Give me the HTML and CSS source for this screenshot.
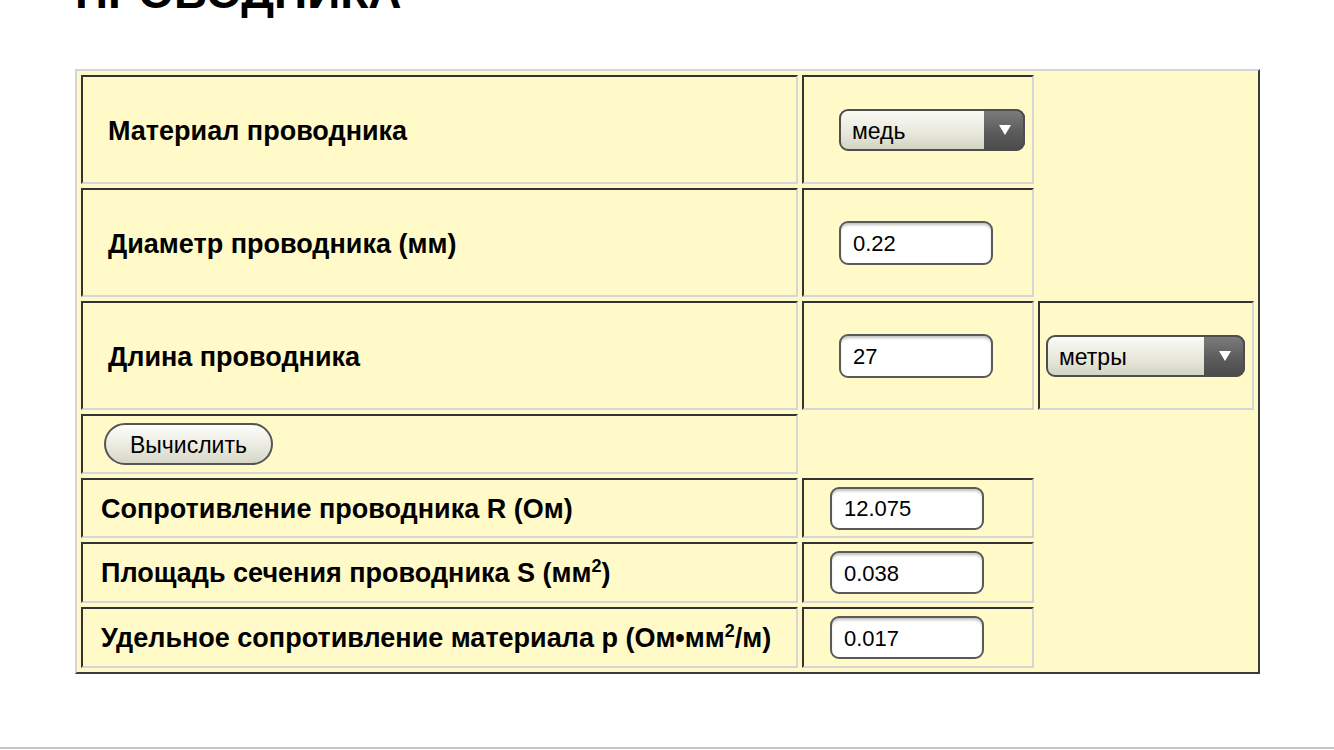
FILE: index.html
```html
<!DOCTYPE html>
<html lang="ru">
<head>
  <meta charset="UTF-8" />
  <title>Сопротивление проводника</title>
  <link rel="stylesheet" href="styles.css">
</head>
<body>
  <div class="page">
    <h1 class="title">ПРОВОДНИКА</h1>

    <table class="calc">
      <colgroup>
        <col class="col-label">
        <col class="col-field">
        <col class="col-unit">
      </colgroup>
      <tr class="row-in">
        <td class="label">Материал проводника</td>
        <td class="field">
          <span class="pick pick-mat">
            <select>
              <option selected>медь</option>
              <option>алюминий</option>
              <option>серебро</option>
            </select>
          </span>
        </td>
      </tr>
      <tr class="row-in">
        <td class="label">Диаметр проводника (мм)</td>
        <td class="field"><input type="text" class="box" value="0.22"></td>
      </tr>
      <tr class="row-in">
        <td class="label">Длина проводника</td>
        <td class="field"><input type="text" class="box" value="27"></td>
        <td class="unit">
          <span class="pick pick-unit">
            <select>
              <option selected>метры</option>
              <option>сантиметры</option>
            </select>
          </span>
        </td>
      </tr>
      <tr class="row-btn">
        <td class="action"><button class="calc-btn">Вычислить</button></td>
      </tr>
      <tr class="row-out">
        <td class="label">Сопротивление проводника R (Ом)</td>
        <td class="field"><input type="text" class="box" value="12.075"></td>
      </tr>
      <tr class="row-out tall">
        <td class="label">Площадь сечения проводника S (мм<sup>2</sup>)</td>
        <td class="field"><input type="text" class="box" value="0.038"></td>
      </tr>
      <tr class="row-out tall">
        <td class="label">Удельное сопротивление материала p (Ом•мм<sup>2</sup>/м)</td>
        <td class="field"><input type="text" class="box" value="0.017"></td>
      </tr>
    </table>
  </div>

  <div class="rule"></div>
</body>
</html>
```

FILE: styles.css
```css
body {
  margin: 0;
  padding: 0;
  font-family: "Liberation Sans", Arial, sans-serif;
  color: #000;
  background: #fff;
  overflow: hidden;
}

.page {
  padding: 0 74px 0 75px;
}

.title {
  margin: -34px 0 51px;
  font-size: 46px;
  line-height: 52px;
  font-weight: bold;
}

.calc {
  width: 1185px;
  table-layout: fixed;
  border-collapse: separate;
  border-spacing: 4px;
  background: #fffac8;
  border: 2px solid;
  border-color: #d4d4d4 #3a3a3a #3a3a3a #d4d4d4;
}

.col-label { width: 717px; }
.col-field { width: 232px; }
.col-unit { width: 216px; }

.calc td {
  box-sizing: border-box;
  border: 2px solid;
  border-color: #333 #d6d6d6 #d6d6d6 #333;
  padding: 0;
  vertical-align: middle;
}

.row-in td { height: 109px; }
.row-btn td { height: 60px; }
.row-out td { height: 60px; }
.row-out.tall td { height: 61px; }

.label {
  font-size: 27px;
  font-weight: bold;
  white-space: nowrap;
}

.calc .row-in .label { padding: 3px 0 0 25px; }
.calc .row-in .field { padding-left: 35px; }
.calc .row-out .label { padding: 2px 0 0 18px; }
.calc .row-out .field { padding-left: 26px; }
.calc .unit { padding-left: 6px; }
.calc .action { padding-left: 21px; }

.label sup {
  font-size: 18px;
  line-height: 0;
}

.box {
  box-sizing: border-box;
  width: 154px;
  height: 44px;
  padding: 2px 12px 0;
  font: 22px "Liberation Sans", Arial, sans-serif;
  color: #000;
  background: #fff;
  border: 2px solid #5a5a5a;
  border-radius: 9px;
  box-shadow: inset 0 3px 3px -1px rgba(0, 0, 0, 0.25);
  outline: none;
}

.row-out .box { height: 43px; }

.pick {
  position: relative;
  display: inline-block;
  vertical-align: middle;
}

.pick select {
  box-sizing: border-box;
  height: 42px;
  padding: 2px 0 0 11px;
  font: 23px "Liberation Sans", Arial, sans-serif;
  color: #000;
  appearance: none;
  -webkit-appearance: none;
  border: 2px solid #4e4e4e;
  border-radius: 9px;
  background: linear-gradient(#fbfbf6, #e6e6da 60%, #d4d4c4);
  outline: none;
}

.pick-mat select { width: 186px; }
.pick-unit select { width: 199px; }

/* dark arrow part of the select */
.pick::after {
  content: "";
  position: absolute;
  top: 0;
  right: 0;
  width: 41px;
  height: 42px;
  box-sizing: border-box;
  border: 2px solid #4e4e4e;
  border-left: none;
  border-radius: 0 9px 9px 0;
  background: linear-gradient(#7c7c7c, #5c5c5c 55%, #4c4c4c);
  pointer-events: none;
}

.pick::before {
  content: "";
  position: absolute;
  z-index: 1;
  top: 16px;
  right: 14px;
  border-left: 6px solid transparent;
  border-right: 6px solid transparent;
  border-top: 10px solid #fff;
  pointer-events: none;
}

.calc-btn {
  box-sizing: border-box;
  width: 169px;
  height: 42px;
  padding: 2px 0 0;
  font: 23px "Liberation Sans", Arial, sans-serif;
  color: #000;
  border: 2px solid #555;
  border-radius: 21px;
  background: linear-gradient(#fdfdfb, #ecece2 50%, #d6d6c8);
  cursor: pointer;
}

.rule {
  position: absolute;
  left: 0;
  right: 0;
  top: 747px;
  border-top: 2px solid #c4c4c4;
}
```
